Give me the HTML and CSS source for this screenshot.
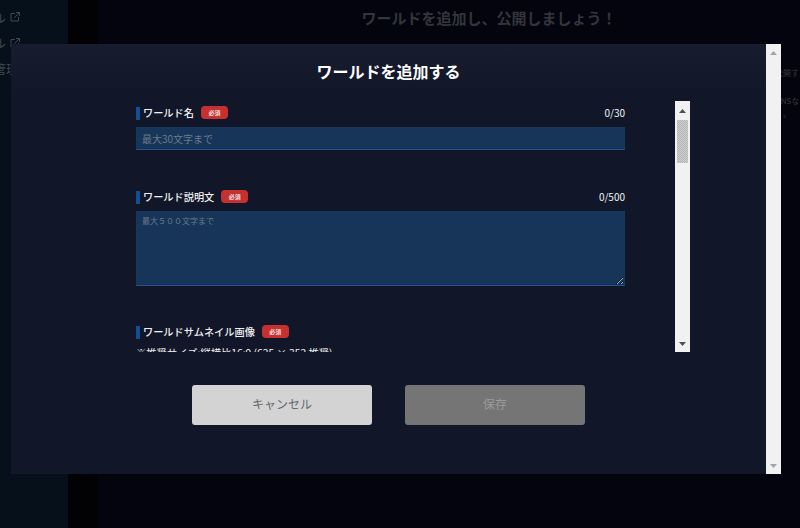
FILE: index.html

```html
<!DOCTYPE html>
<html lang="ja">
<head>
    <meta charset="UTF-8">
    <meta name="viewport" content="width=device-width, initial-scale=1.0">
    <title>ワールドを追加する</title>
    <link rel="stylesheet" href="styles.css">
</head>
<body>
    <aside class="side">
        <ul class="side-list">
            <li><span class="side-text">チャンネル</span>
                <svg class="ext" viewBox="0 0 10 10"><path d="M5 1.500H1v7.500h7.500V5M6 .5h3.500V4M9.500 .5 4.500 5.500"/></svg>
            </li>
            <li><span class="side-text">チャンネル</span>
                <svg class="ext" viewBox="0 0 10 10"><path d="M5 1.500H1v7.500h7.500V5M6 .5h3.500V4M9.500 .5 4.500 5.500"/></svg>
            </li>
            <li><span class="side-text">ワールド管理</span></li>
        </ul>
    </aside>
    <div class="gutter"></div>
    <main class="main">
        <h1 class="page-title">ワールドを追加し、公開しましょう！</h1>
        <div class="notes">
            <p class="note-a">公開す</p>
            <p class="note-b">SNSな</p>
            <p class="note-c">。</p>
        </div>
    </main>

    <section class="modal">
        <div class="modal-main">
            <h2 class="modal-title">ワールドを追加する</h2>
            <div class="panel">
                <form class="form">
                    <div class="field">
                        <div class="field-head">
                            <label class="label">ワールド名</label>
                            <span class="badge">必須</span>
                            <span class="count">0/30</span>
                        </div>
                        <input class="input" type="text" placeholder="最大30文字まで">
                    </div>
                    <div class="field">
                        <div class="field-head">
                            <label class="label">ワールド説明文</label>
                            <span class="badge">必須</span>
                            <span class="count">0/500</span>
                        </div>
                        <textarea class="textarea" placeholder="最大５００文字まで"></textarea>
                    </div>
                    <div class="field">
                        <div class="field-head">
                            <label class="label">ワールドサムネイル画像</label>
                            <span class="badge">必須</span>
                        </div>
                        <p class="hint">※推奨サイズ:縦横比16:9 (625 × 352 推奨)</p>
                    </div>
                </form>
                <div class="bar bar-inner">
                    <svg class="arrow" viewBox="0 0 7 4"><path d="M3.500 0 7 4H0z"/></svg>
                    <div class="thumb"></div>
                    <svg class="arrow arrow-end" viewBox="0 0 7 4"><path d="M0 0h7L3.500 4z"/></svg>
                </div>
            </div>
            <div class="actions">
                <button class="btn btn-cancel" type="button">キャンセル</button>
                <button class="btn btn-save" type="button">保存</button>
            </div>
        </div>
        <div class="bar bar-outer">
            <svg class="arrow" viewBox="0 0 7 4"><path d="M3.500 0 7 4H0z"/></svg>
            <svg class="arrow arrow-end" viewBox="0 0 7 4"><path d="M0 0h7L3.500 4z"/></svg>
        </div>
    </section>
</body>
</html>
```

FILE: styles.css

```css
* {
    margin: 0;
    padding: 0;
    box-sizing: border-box;
}

ul,
li {
    list-style: none;
}

html,
body {
    height: 100%;
}

body {
    display: flex;
    overflow: hidden;
    background: #03040d;
    font-family: "Noto Sans CJK JP", "Noto Sans", sans-serif;
}

.side {
    width: 68px;
    flex: none;
    overflow: hidden;
    background: #05101b;
    padding-top: 5px;
}

.side-list {
    margin-left: -54px;
    color: #40484e;
    font-size: 12px;
    line-height: 18px;
}

.side-list li {
    display: flex;
    align-items: center;
    height: 25.500px;
    white-space: nowrap;
}

.ext {
    width: 10px;
    height: 10px;
    margin-left: 4px;
    margin-top: -1px;
    fill: none;
    stroke: #40484e;
    stroke-width: 1;
}

.gutter {
    width: 30px;
    flex: none;
    background: #020204;
}

.main {
    flex: 1;
    min-width: 0;
    display: flex;
    flex-direction: column;
    padding: 8px 0 0 80px;
}

.page-title {
    font-size: 15px;
    line-height: 20px;
    font-weight: 700;
    text-align: center;
    white-space: nowrap;
    color: #33353c;
}

.notes {
    align-self: flex-end;
    width: 25px;
    margin-top: 38px;
    font-size: 8px;
    line-height: 13px;
    white-space: nowrap;
    color: #34373e;
}

.note-b {
    margin-top: 15px;
    padding-left: 1px;
}

.note-c {
    padding-left: 8px;
}

.modal {
    position: absolute;
    left: 11px;
    top: 44px;
    width: 770px;
    height: 430px;
    display: flex;
    background: linear-gradient(#171d2e, #111729 50px);
}

.modal-main {
    flex: 1;
    min-width: 0;
    display: flex;
    flex-direction: column;
    padding-top: 17px;
}

.modal-title {
    font-size: 16px;
    line-height: 20px;
    font-weight: 700;
    text-align: center;
    color: #fff;
    margin-bottom: 20px;
}

.panel {
    display: flex;
    height: 251px;
    margin-left: 125px;
    width: 554px;
}

.form {
    flex: 1;
    min-width: 0;
    overflow: hidden;
    padding: 5px 50px 0 0;
}

.field {
    margin-bottom: 39px;
}

.field:first-child {
    margin-bottom: 40px;
}

.field-head {
    display: flex;
    align-items: flex-start;
    height: 14px;
    margin-bottom: 7px;
}

.label {
    font-size: 10.200px;
    line-height: 12px;
    font-weight: 500;
    color: #f2f2f2;
    border-left: 4px solid #124f94;
    padding: 0 0 1px 3px;
    margin-top: 1px;
}

.badge {
    width: 27px;
    height: 13px;
    margin-left: 7px;
    border-radius: 4px;
    background: #c53030;
    color: #f4dede;
    font-size: 6px;
    line-height: 13px;
    font-weight: 700;
    text-align: center;
}

.count {
    margin-left: auto;
    font-size: 10px;
    line-height: 14px;
    color: #f2f2f2;
}

.input,
.textarea {
    display: block;
    width: 100%;
    border: 1px solid #17375d;
    border-bottom-color: #22538e;
    background: #163558;
    outline: none;
    font-family: inherit;
    color: #fff;
}

.input {
    height: 23px;
    padding: 0 5px;
    font-size: 10px;
}

.textarea {
    height: 75px;
    padding: 3px 5px;
    font-size: 8px;
    line-height: 12px;
    resize: vertical;
}

.input::placeholder,
.textarea::placeholder {
    color: #6b7a8c;
    opacity: 1;
}

.hint {
    margin-top: 2px;
    font-size: 10.300px;
    line-height: 13px;
    white-space: nowrap;
    color: #f2f2f2;
}

.actions {
    display: flex;
    justify-content: center;
    gap: 33px;
    margin-top: 33px;
}

.btn {
    width: 180px;
    height: 40px;
    border: 0;
    border-radius: 3px;
    padding-bottom: 3px;
    font-family: inherit;
    font-size: 12px;
}

.btn-cancel {
    background: #d3d3d3;
    color: #66686d;
}

.btn-save {
    background: #757575;
    color: #9a9a9a;
}

.bar {
    width: 15px;
    flex: none;
    display: flex;
    flex-direction: column;
    align-items: center;
    background: #f1f1f1;
    padding: 7px 0 6px;
}

.bar-inner {
    padding-top: 8px;
}

.arrow {
    width: 7px;
    height: 4px;
    flex: none;
    fill: #505050;
}

.arrow-end {
    margin-top: auto;
}

.bar-outer .arrow {
    fill: #a3a3a3;
}

.thumb {
    width: 11px;
    height: 43px;
    margin-top: 7px;
    background: repeating-conic-gradient(#b4b4b4 0 25%, #d0d0d0 0 50%) 0 0 / 2px 2px;
}
```
